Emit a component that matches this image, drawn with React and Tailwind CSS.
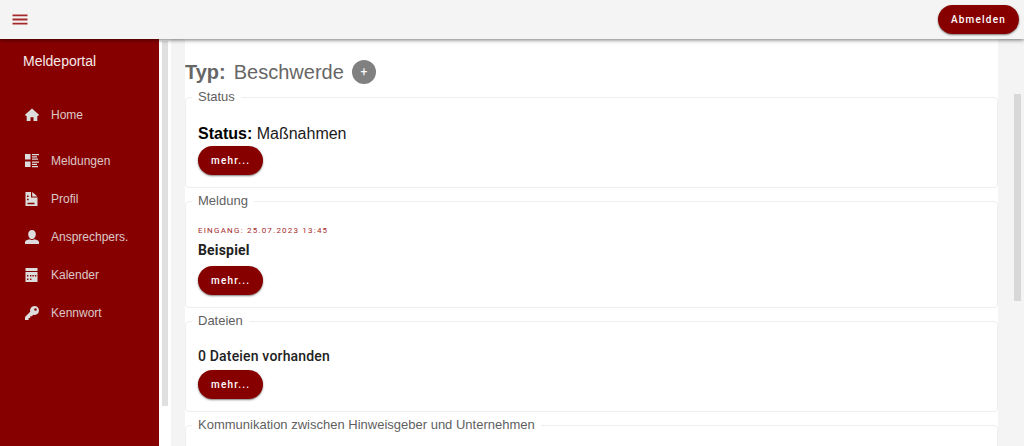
import React from 'react';

const HomeIcon = () => (
  <svg viewBox="0 0 14 14" className="w-3.5 h-3.5" fill="currentColor" aria-hidden="true">
    <path d="M7 .5 14 6.800 13 8h-.7v5H8.500V9.200h-3V13H1.700V8H1L0 6.800z" />
  </svg>
);

const ListIcon = () => (
  <svg viewBox="0 0 14 14" className="w-3.5 h-3.5" fill="currentColor" aria-hidden="true">
    <path d="M0 0h5.500v5.500H0zM0 7.500h5.500V13H0zM7 0h7v1.300H7zM7 2.200h5v1.300H7zM7 4.400h6v1.300H7zM7 7.500h7v1.300H7zM7 9.700h5V11H7zM7 11.900h6v1.300H7z" />
  </svg>
);

const DocumentIcon = () => (
  <svg viewBox="0 0 14 14" className="w-3.5 h-3.5" fill="currentColor" aria-hidden="true">
    <path
      fillRule="evenodd"
      d="M.5 0H6v5.500h6.500V14H.5zM2 3.500V5h1.600V3.500zM2 6.800v1.400h1.600V6.800zM2.500 10.800v1.400h7v-1.400zM7.200 0l5.300 4.600H7.200z"
    />
  </svg>
);

const PersonIcon = () => (
  <svg viewBox="0 0 14 14" className="w-3.5 h-3.5" fill="currentColor" aria-hidden="true">
    <path d="M7 0c2.400 0 3.800 1.700 3.800 4.200S9.200 9 7 9 3.200 6.700 3.200 4.200 4.600 0 7 0zM0 14v-2c0-1.400 2.400-2.200 4.500-2.700 1.500 1 3.500 1 5 0C11.600 9.800 14 10.600 14 12v2z" />
  </svg>
);

const CalendarIcon = () => (
  <svg viewBox="0 0 14 14" className="w-3.5 h-3.5" fill="currentColor" aria-hidden="true">
    <path
      fillRule="evenodd"
      d="M.5 0h12v3H.5zM.5 4h12v10H.5zM5 7v1.400h1.400V7zM7.400 7v1.400h1.400V7zM9.900 7v1.400h1.400V7zM2 7v1.400h1.400V7zM2 10.500v1.400h1.400v-1.400zM5 10.500v1.400h1.400v-1.400z"
    />
  </svg>
);

const KeyIcon = () => (
  <svg viewBox="0 0 14 14" className="w-3.5 h-3.5" fill="currentColor" aria-hidden="true">
    <path
      fillRule="evenodd"
      d="M9.500 0A4.500 4.500 0 0 1 14 4.500 4.500 4.500 0 0 1 8.200 8.800L7 10.200H5.200V12H3.600v2H0v-3l5.200-5.200A4.500 4.500 0 0 1 9.500 0zm1 2.200a1.300 1.300 0 1 0 0 2.600 1.300 1.300 0 0 0 0-2.600z"
    />
  </svg>
);

const navItems = [
  { label: 'Meldungen', Icon: ListIcon },
  { label: 'Profil', Icon: DocumentIcon },
  { label: 'Ansprechpers.', Icon: PersonIcon },
  { label: 'Kalender', Icon: CalendarIcon },
  { label: 'Kennwort', Icon: KeyIcon },
];

const NavLink = ({ label, Icon }) => (
  <a href="#" className="flex items-center h-[38px] gap-3 pl-[25px] text-xs text-[#dcc8c8]">
    <span className="text-[#dddddd]">
      <Icon />
    </span>
    {label}
  </a>
);

const PillButton = ({ children }) => (
  <button
    type="button"
    className="block h-[29px] px-[13px] rounded-full bg-[#870000] text-white font-['Roboto',sans-serif] text-[10px] font-medium tracking-[1.2px] shadow-[0_1px_2px_rgba(0,0,0,0.5)]"
  >
    {children}
  </button>
);

const Section = ({ title, children }) => (
  <fieldset className="min-w-0 border border-[#eeeeee] rounded px-3 pb-3">
    <legend className="-ml-1.5 px-1.5 text-[13px] leading-[18px] text-[#5f5f5f]">{title}</legend>
    <div className="pt-4">{children}</div>
  </fieldset>
);

const App = () => {
  return (
    <div className="flex flex-col h-screen overflow-hidden bg-[#f4f4f4] font-['Liberation_Sans',Arial,sans-serif]">
      <header className="relative z-10 flex items-center justify-between shrink-0 h-[39px] pl-3 pr-[5px] bg-[#f4f4f4] shadow-[0_1px_4px_rgba(0,0,0,0.55)]">
        <button type="button" aria-label="Menü" className="text-[#a52a2a]">
          <svg viewBox="0 0 16 12" className="w-4 h-3" fill="currentColor" aria-hidden="true">
            <path d="M.5 .5h15v1.800H.5zM.5 4.600h15v1.800H.5zM.5 8.700h15v1.800H.5z" />
          </svg>
        </button>
        <PillButton>Abmelden</PillButton>
      </header>

      <div className="flex flex-1 min-h-0">
        <aside className="shrink-0 w-[159px] pt-3 bg-[#870000]">
          <h1 className="pl-[23px] text-sm text-[#f5eaea]">Meldeportal</h1>
          <nav className="pt-[25px]">
            <NavLink label="Home" Icon={HomeIcon} />
            <div className="pt-2">
              {navItems.map((item) => (
                <NavLink key={item.label} label={item.label} Icon={item.Icon} />
              ))}
            </div>
          </nav>
        </aside>
        <div className="shrink-0 w-3 px-[3px] pt-0.5 pb-10 bg-white">
          <div className="h-full bg-[#e0e0e0]" />
        </div>

        <main className="flex-1 min-w-0 ml-3.5 pt-[21px] bg-white overflow-hidden">
          <div className="flex items-center gap-2 h-6 mb-1 text-xl text-[#666666]">
            <h2 className="flex gap-2">
              <b>Typ:</b> Beschwerde
            </h2>
            <button
              type="button"
              className="w-6 h-6 rounded-full bg-[#808080] text-white text-xs font-['Roboto',sans-serif]"
            >
              +
            </button>
          </div>

          <div className="flex flex-col gap-1">
            <Section title="Status">
              <p className="text-base leading-6 text-[#1a1a1a]">
                <b className="text-black">Status:</b> Maßnahmen
              </p>
              <PillButton>mehr...</PillButton>
            </Section>

            <Section title="Meldung">
              <p className="font-['Roboto',sans-serif] text-[8px] leading-[10px] tracking-[1.2px] text-[#a52a2a]">
                EINGANG: 25.07.2023 13:45
              </p>
              <h3 className="pt-1 pb-1.5 font-['Roboto',sans-serif] text-sm font-bold tracking-[0.0125em] text-[#222222]">
                Beispiel
              </h3>
              <PillButton>mehr...</PillButton>
            </Section>

            <Section title="Dateien">
              <h3 className="pb-1 font-['Roboto',sans-serif] text-sm font-medium tracking-[0.0125em] text-[#222222]">
                0 Dateien vorhanden
              </h3>
              <PillButton>mehr...</PillButton>
            </Section>

            <Section title="Kommunikation zwischen Hinweisgeber und Unternehmen" />
          </div>
        </main>

        <div className="shrink-0 w-[26px] pl-4 pr-[3px] pt-[55px]">
          <div className="h-[207px] bg-[#d8d8d8]" />
        </div>
      </div>
    </div>
  );
};

export default App;
